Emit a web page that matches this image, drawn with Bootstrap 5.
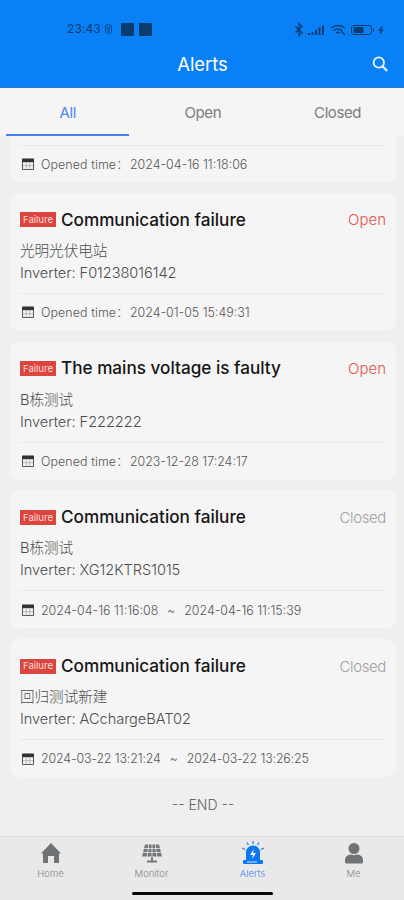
<!DOCTYPE html>
<html lang="en">
<head>
<meta charset="utf-8">
<meta name="viewport" content="width=device-width, initial-scale=1">
<title>Alerts</title>
<link href="https://cdn.jsdelivr.net/npm/bootstrap@5.3.0/dist/css/bootstrap.min.css" rel="stylesheet">
<style>
  body { font-family: Inter, "Noto Sans CJK SC", sans-serif; background: #efefef; color: #4d4d4d; height: 900px; overflow: hidden; line-height: 1; }
  svg { display: block; flex: none; }
  .topbar { height: 88px; background: #0a80f6; border-bottom: 1px solid #2a74d0; }
  .status { height: 58px; padding: 0 19px 0 67px; color: #0b3c70; font-size: 12px; }
  .status .clock { letter-spacing: .1px; width: 33px; }
  .sq { width: 13px; height: 13px; background: #0b3c70; }
  .sq + .sq { margin-left: 5px; }
  .titlebar { height: 12px; padding: 0 16px; color: #fff; }
  .titlebar h1 { font-size: 18.5px; font-weight: 400; margin: 0; padding-left: 17px; letter-spacing: -.1px; }
  .tabs { height: 48px; background: #f5f5f5; padding: 0 0 0 1px; }
  .tabs a { color: #7c7c7c; font-size: 15px; letter-spacing: -.4px; text-decoration: none; margin: 0 5px; padding: 3px 0 0 2px; border-bottom: 2px solid transparent; }
  .tabs a.on { color: #5083ef; border-color: #4b7ff2; padding-left: 0; }
  .feed { height: 700px; padding: 0 8px 0 10px; }
  .alert-card { height: 138px; background: #f5f5f5; border-radius: 9px; padding: 0 10px; margin-bottom: 10.7px; flex: none; }
  .alert-card.cut { height: 46.3px; border-radius: 0 0 9px 9px; }
  .head { height: 47px; padding-top: 7px; }
  .tag { width: 36px; height: 15px; background: #dc453d; color: #fbdedc; font-size: 9.5px; }
  .head h2 { font-size: 17.15px; font-weight: 500; color: #161616; margin: 0 0 0 5px; }
  .state { font-size: 15px; color: #a0a0a0; letter-spacing: -.38px; font-weight: 300; }
  .state.open { color: #e2544e; letter-spacing: 0; }
  .info { height: 53px; font-size: 14.6px; font-weight: 300; letter-spacing: -.05px; }
  .info div { height: 22px; line-height: 23px; white-space: nowrap; }
  .when { height: 38px; border-top: 1px solid #e9e9e9; font-size: 12.4px; font-weight: 300; white-space: pre; color: #555; padding: 2px 0 0 2px; }
  .when svg { margin: -2px 7px 0 0; }
  .when .ot { width: 89px; letter-spacing: .1px; }
  .when .til { width: 26px; text-align: center; }
  .when.wide { letter-spacing: -.13px; }
  .cut .when { margin-top: 9px; height: 38px; }
  .endmark { font-size: 14px; font-weight: 300; color: #666; margin-top: 10px; }
  .bottom { height: 64px; background: #e9e9e9; border-top: 1px solid #dedede; position: relative; }
  .bottom a { color: #858585; font-size: 9.5px; font-weight: 300; text-decoration: none; padding-top: 4px; }
  .bottom a.on { color: #5083ef; }
  .bottom a span { margin-top: 4px; }
  .pill { position: absolute; left: 132px; bottom: 5.5px; width: 141px; height: 3px; border-radius: 2px; background: #080808; }
</style>
</head>
<body>
<svg width="0" height="0" class="position-absolute">
  <symbol id="cal" viewBox="0 0 12 12"><path d="M.5 1h11v10.500h-11z" fill="none" stroke="#555"/><path d="M0 .8h12v3.400H0z" fill="#333"/><path d="M4.300 4v7.500M7.800 4v7.500M1 7.700h10" stroke="#aaa" stroke-width=".8"/></symbol>
</svg>
<header class="topbar">
  <div class="status d-flex align-items-center">
    <span class="clock">23:43</span>
    <svg width="9" height="12" viewBox="0 0 9 12" class="ms-1" fill="none" stroke="#0b3c70" stroke-width=".8"><path d="M1.500 2.500 4.500 1 7.500 2.500V9L4.500 11 1.500 9zM2.500 4h4M2.500 6h4M3 8h3"/></svg>
    <span class="sq flex-shrink-0 ms-2"></span><span class="sq flex-shrink-0"></span>
    <svg class="ms-auto" width="91" height="15" viewBox="0 0 91 15" fill="none" stroke="#0b3c70">
      <path d="M1.500 4.500 8 10.500 5 13.500V1.500L8 4.500 1.500 10.500" stroke-width="1.300"/>
      <path d="M15 13v-2M18.500 13v-3M22 13V8M25.500 13V5.500M29 13V3.500" stroke-width="2"/>
      <path d="M37 6q7-5 14 0M39.500 8.500q4.500-3 9 0M42 11q2-1.500 4 0M47 9l4 4" stroke-width="1.300"/>
      <rect x="57.500" y="3.500" width="20" height="9" rx="2.500"/><path d="M60 5.500h9v5h-9z" fill="#0b3c70"/><path d="M79.500 6.500v3"/>
      <path d="M88 4.500 85.500 8h3L86 11.500" stroke-width="1.300"/>
    </svg>
  </div>
  <div class="titlebar d-flex align-items-center">
    <h1 class="w-100 text-center">Alerts</h1>
    <svg width="16" height="16" viewBox="0 0 16 16" fill="none" stroke="#e6f3ff" stroke-width="1.800"><circle cx="6.800" cy="6.500" r="5.200"/><path d="m10.500 10.300 4.700 4.700" stroke-width="2.200"/></svg>
  </div>
</header>
<nav class="tabs d-flex">
  <a class="on d-flex flex-fill w-100 align-items-center justify-content-center" href="#">All</a>
  <a class="d-flex flex-fill w-100 align-items-center justify-content-center" href="#">Open</a>
  <a class="d-flex flex-fill w-100 align-items-center justify-content-center" href="#">Closed</a>
</nav>
<main class="feed d-flex flex-column">
  <article class="alert-card cut d-flex flex-column"><div class="when d-flex align-items-center"><svg width="12" height="12"><use href="#cal"/></svg><span class="ot">Opened time：</span><span>2024-04-16 11:18:06</span></div></article>
  <article class="alert-card">
    <div class="head d-flex align-items-center"><span class="tag d-flex align-items-center justify-content-center">Failure</span><h2>Communication failure</h2><span class="state open ms-auto">Open</span></div>
    <div class="info"><div>光明光伏电站</div><div>Inverter: F01238016142</div></div>
    <div class="when d-flex align-items-center"><svg width="12" height="12"><use href="#cal"/></svg><span class="ot">Opened time：</span><span>2024-01-05 15:49:31</span></div>
  </article>
  <article class="alert-card">
    <div class="head d-flex align-items-center"><span class="tag d-flex align-items-center justify-content-center">Failure</span><h2>The mains voltage is faulty</h2><span class="state open ms-auto">Open</span></div>
    <div class="info"><div>B栋测试</div><div>Inverter: F222222</div></div>
    <div class="when d-flex align-items-center"><svg width="12" height="12"><use href="#cal"/></svg><span class="ot">Opened time：</span><span>2023-12-28 17:24:17</span></div>
  </article>
  <article class="alert-card">
    <div class="head d-flex align-items-center"><span class="tag d-flex align-items-center justify-content-center">Failure</span><h2>Communication failure</h2><span class="state ms-auto">Closed</span></div>
    <div class="info"><div>B栋测试</div><div>Inverter: XG12KTRS1015</div></div>
    <div class="when d-flex align-items-center"><svg width="12" height="12"><use href="#cal"/></svg><span>2024-04-16 11:16:08</span><span class="til">~</span><span>2024-04-16 11:15:39</span></div>
  </article>
  <article class="alert-card">
    <div class="head d-flex align-items-center"><span class="tag d-flex align-items-center justify-content-center">Failure</span><h2>Communication failure</h2><span class="state ms-auto">Closed</span></div>
    <div class="info"><div>回归测试新建</div><div>Inverter: ACchargeBAT02</div></div>
    <div class="when wide d-flex align-items-center"><svg width="12" height="12"><use href="#cal"/></svg><span>2024-03-22 13:21:24</span><span class="til">~</span><span>2024-03-22 13:26:25</span></div>
  </article>
  <div class="endmark text-center">-- END --</div>
</main>
<footer class="bottom d-flex">
  <a class="w-100 d-flex flex-column align-items-center" href="#"><svg width="22" height="24" viewBox="0 0 22 24"><path d="M11 2 21 12.500h-2V22h-5v-7H8v7H3v-9.500H1z" fill="#6f7377"/></svg><span>Home</span></a>
  <a class="w-100 d-flex flex-column align-items-center" href="#"><svg width="22" height="24" viewBox="0 0 22 24"><path d="M4 3.500h14l3 12H1z" fill="#74777a"/><path d="M7.800 3 6 16M11 3v13M14.200 3 16 16M2 7.500h18M1 11.500h20" stroke="#e9e9e9" stroke-width=".8"/><path d="M11 16v4M6 20.500h10" stroke="#74777a" stroke-width="1.800"/></svg><span>Monitor</span></a>
  <a class="on w-100 d-flex flex-column align-items-center" href="#"><svg width="22" height="24" viewBox="0 0 22 24"><path d="M4 19v-8a7 6.500 0 0 1 14 0v8z" fill="#0b78f2"/><rect x="1" y="19" width="20" height="4" rx="1" fill="#0b78f2"/><path d="M5 21h10" stroke="#8fc0f8" stroke-width="1.500"/><path d="m12 8-4 6h3l-1 4 4-6h-3z" fill="#fff"/><path d="M11 0v3M5 1.500 6.500 4M17 1.500 15.500 4M0 7l3 1.500M22 7l-3 1.500" stroke="#2d83ee" stroke-width="1.300"/></svg><span>Alerts</span></a>
  <a class="w-100 d-flex flex-column align-items-center" href="#"><svg width="22" height="24" viewBox="0 0 22 24" fill="#6f7377"><circle cx="11" cy="7.500" r="5.500"/><path d="M2 21v-2q0-5 6-5.500 3 1.500 6 0 6 .5 6 5.500v2q0 1.500-1.500 1.500h-15Q2 22.500 2 21"/></svg><span>Me</span></a>
  <div class="pill"></div>
</footer>
<script src="https://cdn.jsdelivr.net/npm/bootstrap@5.3.0/dist/js/bootstrap.bundle.min.js"></script>
</body>
</html>
